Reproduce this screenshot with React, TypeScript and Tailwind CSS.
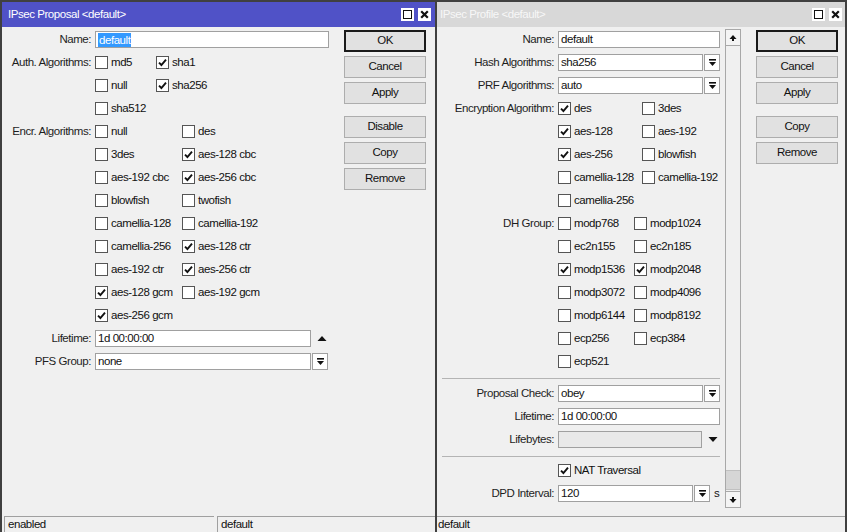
import type { ReactNode } from 'react'

const fontCls = "font-['Liberation_Sans',Arial,sans-serif]"

function Check({ on }: { on?: boolean }) {
  return (
    <span className="flex h-[13px] w-[13px] shrink-0 items-center justify-center border border-[#555] bg-white">
      {on ? (
        <svg width="9" height="9" viewBox="0 0 9 9">
          <path d="M1 4.6 L3.4 7 L8 1.6" fill="none" stroke="#111" strokeWidth="1.9" />
        </svg>
      ) : null}
    </span>
  )
}

function CheckItem({ label, on, w }: { label: string; on?: boolean; w?: string }) {
  return (
    <div className={`flex items-center gap-[3px] ${w ?? ''}`}>
      <Check on={on} />
      <span>{label}</span>
    </div>
  )
}

function DropIcon() {
  return (
    <svg width="9" height="9" viewBox="0 0 9 9">
      <rect x="1" y="1" width="7" height="1.6" fill="#111" />
      <path d="M1 4 H8 L4.5 8 Z" fill="#111" />
    </svg>
  )
}

function DropBtn({ className }: { className?: string }) {
  return (
    <div
      className={`flex h-[17px] w-[16px] items-center justify-center border border-[#a0a0a0] bg-white ${className ?? ''}`}
    >
      <DropIcon />
    </div>
  )
}

function Field({ value, w, disabled, selected }: { value?: string; w: string; disabled?: boolean; selected?: boolean }) {
  return (
    <div
      className={`flex h-[17px] items-center border border-[#a0a0a0] px-[2px] ${w} ${disabled ? 'bg-[#e9e9e9]' : 'bg-white'}`}
    >
      {selected ? <span className="bg-[#3399ff] px-[1px] leading-[14px] text-white">{value}</span> : value}
    </div>
  )
}

function Row({ label, lw, children }: { label?: string; lw: string; children?: ReactNode }) {
  return (
    <div className="flex h-[23px] items-center">
      <div className={`${lw} shrink-0 text-right text-[#1e1e1e]`}>{label ? `${label}:` : ''}</div>
      <div className="ml-[4px] flex items-center">{children}</div>
    </div>
  )
}

function cn(...a: (string | false | undefined)[]) {
  return a.filter(Boolean).join(' ')
}

function Btn({ children, primary }: { children: ReactNode; primary?: boolean }) {
  return (
    <div
      className={cn(
        'flex h-[22px] w-[82px] items-center justify-center bg-[#e1e1e1] text-[#111]',
        primary ? 'border border-[#1a1a1a] shadow-[inset_0_0_0_1px_#1a1a1a]' : 'border border-[#adadad]'
      )}
    >
      {children}
    </div>
  )
}

function TitleButtons() {
  return (
    <div className="flex items-center gap-[4px]">
      <div className="flex h-[13px] w-[13px] items-center justify-center bg-white">
        <div className="h-[9px] w-[9px] border-[1.5px] border-[#111]" />
      </div>
      <div className="flex h-[13px] w-[13px] items-center justify-center bg-white">
        <svg width="9" height="9" viewBox="0 0 9 9">
          <path d="M1.2 1.2 L7.8 7.8 M7.8 1.2 L1.2 7.8" stroke="#111" strokeWidth="2.2" />
        </svg>
      </div>
    </div>
  )
}

function Arrow({ up }: { up?: boolean }) {
  return (
    <svg width="8" height="8" viewBox="0 0 8 8">
      {up ? (
        <path d="M4 1 L7.5 5 H5 V7 H3 V5 H0.5 Z" fill="#111" />
      ) : (
        <path d="M4 7 L7.5 3 H5 V1 H3 V3 H0.5 Z" fill="#111" />
      )}
    </svg>
  )
}

function ProposalWindow() {
  const lw = 'w-[89px]'
  return (
    <div className="flex h-[532px] w-[436px] shrink-0 flex-col border-t-2 border-l-2 border-r border-[#404040] bg-[#f0f0f0]">
      <div className="flex h-[25px] shrink-0 items-center justify-between bg-[#5052c7] pl-[6px] pr-[4px] text-white">
        <span>IPsec Proposal &lt;default&gt;</span>
        <TitleButtons />
      </div>
      <div className="flex h-[489px] shrink-0">
        <div className="w-[328px] pt-[1px]">
          <Row label="Name" lw={lw}>
            <Field value="default" w="w-[234px]" selected />
          </Row>
          <Row label="Auth. Algorithms" lw={lw}>
            <CheckItem label="md5" w="w-[61px]" />
            <CheckItem label="sha1" on />
          </Row>
          <Row lw={lw}>
            <CheckItem label="null" w="w-[61px]" />
            <CheckItem label="sha256" on />
          </Row>
          <Row lw={lw}>
            <CheckItem label="sha512" />
          </Row>
          <Row label="Encr. Algorithms" lw={lw}>
            <CheckItem label="null" w="w-[87px]" />
            <CheckItem label="des" />
          </Row>
          <Row lw={lw}>
            <CheckItem label="3des" w="w-[87px]" />
            <CheckItem label="aes-128 cbc" on />
          </Row>
          <Row lw={lw}>
            <CheckItem label="aes-192 cbc" w="w-[87px]" />
            <CheckItem label="aes-256 cbc" on />
          </Row>
          <Row lw={lw}>
            <CheckItem label="blowfish" w="w-[87px]" />
            <CheckItem label="twofish" />
          </Row>
          <Row lw={lw}>
            <CheckItem label="camellia-128" w="w-[87px]" />
            <CheckItem label="camellia-192" />
          </Row>
          <Row lw={lw}>
            <CheckItem label="camellia-256" w="w-[87px]" />
            <CheckItem label="aes-128 ctr" on />
          </Row>
          <Row lw={lw}>
            <CheckItem label="aes-192 ctr" w="w-[87px]" />
            <CheckItem label="aes-256 ctr" on />
          </Row>
          <Row lw={lw}>
            <CheckItem label="aes-128 gcm" on w="w-[87px]" />
            <CheckItem label="aes-192 gcm" />
          </Row>
          <Row lw={lw}>
            <CheckItem label="aes-256 gcm" on />
          </Row>
          <Row label="Lifetime" lw={lw}>
            <Field value="1d 00:00:00" w="w-[216px]" />
            <svg width="10" height="7" viewBox="0 0 10 7" className="ml-[6px]">
              <path d="M0.5 6 L5 1 L9.5 6 Z" fill="#111" />
            </svg>
          </Row>
          <Row label="PFS Group" lw={lw}>
            <Field value="none" w="w-[216px]" />
            <DropBtn className="ml-[1px]" />
          </Row>
        </div>
        <div className="ml-[14px] flex flex-col gap-[4px] pt-[3px]">
          <Btn primary>OK</Btn>
          <Btn>Cancel</Btn>
          <Btn>Apply</Btn>
          <div className="h-[4px]" />
          <Btn>Disable</Btn>
          <Btn>Copy</Btn>
          <Btn>Remove</Btn>
        </div>
      </div>
      <div className="flex h-[16px] shrink-0 gap-[3px] pl-[2px]">
        <div className="w-[210px] border-t border-l border-[#a0a0a0] pl-[3px] leading-[15px]">enabled</div>
        <div className="flex-1 border-t border-l border-[#a0a0a0] pl-[3px] leading-[15px]">default</div>
      </div>
    </div>
  )
}

function ProfileWindow() {
  const lw = 'w-[117px]'
  return (
    <div className="flex h-[532px] flex-1 flex-col border-t-2 border-l border-r-2 border-[#404040] bg-[#f0f0f0]">
      <div className="flex h-[25px] shrink-0 items-center justify-between bg-[#d8d8d8] pl-[3px] pr-[3px] text-[#f7f7f7]">
        <span>IPsec Profile &lt;default&gt;</span>
        <TitleButtons />
      </div>
      <div className="flex h-[489px] shrink-0">
        <div className="h-[483px] w-[288px] shrink-0 overflow-hidden pt-[1px]">
          <Row label="Name" lw={lw}>
            <Field value="default" w="w-[162px]" />
          </Row>
          <Row label="Hash Algorithms" lw={lw}>
            <Field value="sha256" w="w-[145px]" />
            <DropBtn className="ml-[1px]" />
          </Row>
          <Row label="PRF Algorithms" lw={lw}>
            <Field value="auto" w="w-[145px]" />
            <DropBtn className="ml-[1px]" />
          </Row>
          <Row label="Encryption Algorithm" lw={lw}>
            <CheckItem label="des" on w="w-[84px]" />
            <CheckItem label="3des" />
          </Row>
          <Row lw={lw}>
            <CheckItem label="aes-128" on w="w-[84px]" />
            <CheckItem label="aes-192" />
          </Row>
          <Row lw={lw}>
            <CheckItem label="aes-256" on w="w-[84px]" />
            <CheckItem label="blowfish" />
          </Row>
          <Row lw={lw}>
            <CheckItem label="camellia-128" w="w-[84px]" />
            <CheckItem label="camellia-192" />
          </Row>
          <Row lw={lw}>
            <CheckItem label="camellia-256" />
          </Row>
          <Row label="DH Group" lw={lw}>
            <CheckItem label="modp768" w="w-[76px]" />
            <CheckItem label="modp1024" />
          </Row>
          <Row lw={lw}>
            <CheckItem label="ec2n155" w="w-[76px]" />
            <CheckItem label="ec2n185" />
          </Row>
          <Row lw={lw}>
            <CheckItem label="modp1536" on w="w-[76px]" />
            <CheckItem label="modp2048" on />
          </Row>
          <Row lw={lw}>
            <CheckItem label="modp3072" w="w-[76px]" />
            <CheckItem label="modp4096" />
          </Row>
          <Row lw={lw}>
            <CheckItem label="modp6144" w="w-[76px]" />
            <CheckItem label="modp8192" />
          </Row>
          <Row lw={lw}>
            <CheckItem label="ecp256" w="w-[76px]" />
            <CheckItem label="ecp384" />
          </Row>
          <Row lw={lw}>
            <CheckItem label="ecp521" />
          </Row>
          <div className="h-[9px] pt-[5px] pl-[5px]">
            <div className="w-[278px] border-t border-[#b4b4b4]" />
          </div>
          <Row label="Proposal Check" lw={lw}>
            <Field value="obey" w="w-[145px]" />
            <DropBtn className="ml-[1px]" />
          </Row>
          <Row label="Lifetime" lw={lw}>
            <Field value="1d 00:00:00" w="w-[162px]" />
          </Row>
          <Row label="Lifebytes" lw={lw}>
            <Field w="w-[144px]" disabled />
            <svg width="10" height="7" viewBox="0 0 10 7" className="ml-[6px]">
              <path d="M0.5 1 L9.5 1 L5 6 Z" fill="#111" />
            </svg>
          </Row>
          <div className="h-[8px] pt-[5px] pl-[5px]">
            <div className="w-[278px] border-t border-[#b4b4b4]" />
          </div>
          <Row lw={lw}>
            <CheckItem label="NAT Traversal" on />
          </Row>
          <Row label="DPD Interval" lw={lw}>
            <Field value="120" w="w-[135px]" />
            <DropBtn className="ml-[1px]" />
            <span className="ml-[4px]">s</span>
          </Row>
        </div>
        <div className="mt-[2px] flex h-[479px] w-[16px] shrink-0 flex-col border border-[#a8a8a8]">
          <div className="flex h-[16px] items-center justify-center border-b border-[#a8a8a8] bg-[#f4f4f4]">
            <Arrow up />
          </div>
          <div className="flex-1" />
          <div className="h-[20px] border-y border-[#c0c0c0] bg-[#d6d6d6]" />
          <div className="mt-[1px] flex h-[16px] items-center justify-center border-t border-[#a8a8a8] bg-[#f4f4f4]">
            <Arrow />
          </div>
        </div>
        <div className="ml-[15px] flex flex-col gap-[4px] pt-[3px]">
          <Btn primary>OK</Btn>
          <Btn>Cancel</Btn>
          <Btn>Apply</Btn>
          <div className="h-[4px]" />
          <Btn>Copy</Btn>
          <Btn>Remove</Btn>
        </div>
      </div>
      <div className="flex h-[16px] shrink-0">
        <div className="flex-1 border-t border-[#a0a0a0] pl-[1px] leading-[15px]">default</div>
      </div>
    </div>
  )
}

export default function App() {
  return (
    <div
      className={`flex h-[532px] w-[847px] overflow-hidden whitespace-nowrap bg-[#f0f0f0] text-[11.5px] leading-none tracking-[-0.45px] text-[#111] ${fontCls}`}
    >
      <ProposalWindow />
      <ProfileWindow />
    </div>
  )
}
